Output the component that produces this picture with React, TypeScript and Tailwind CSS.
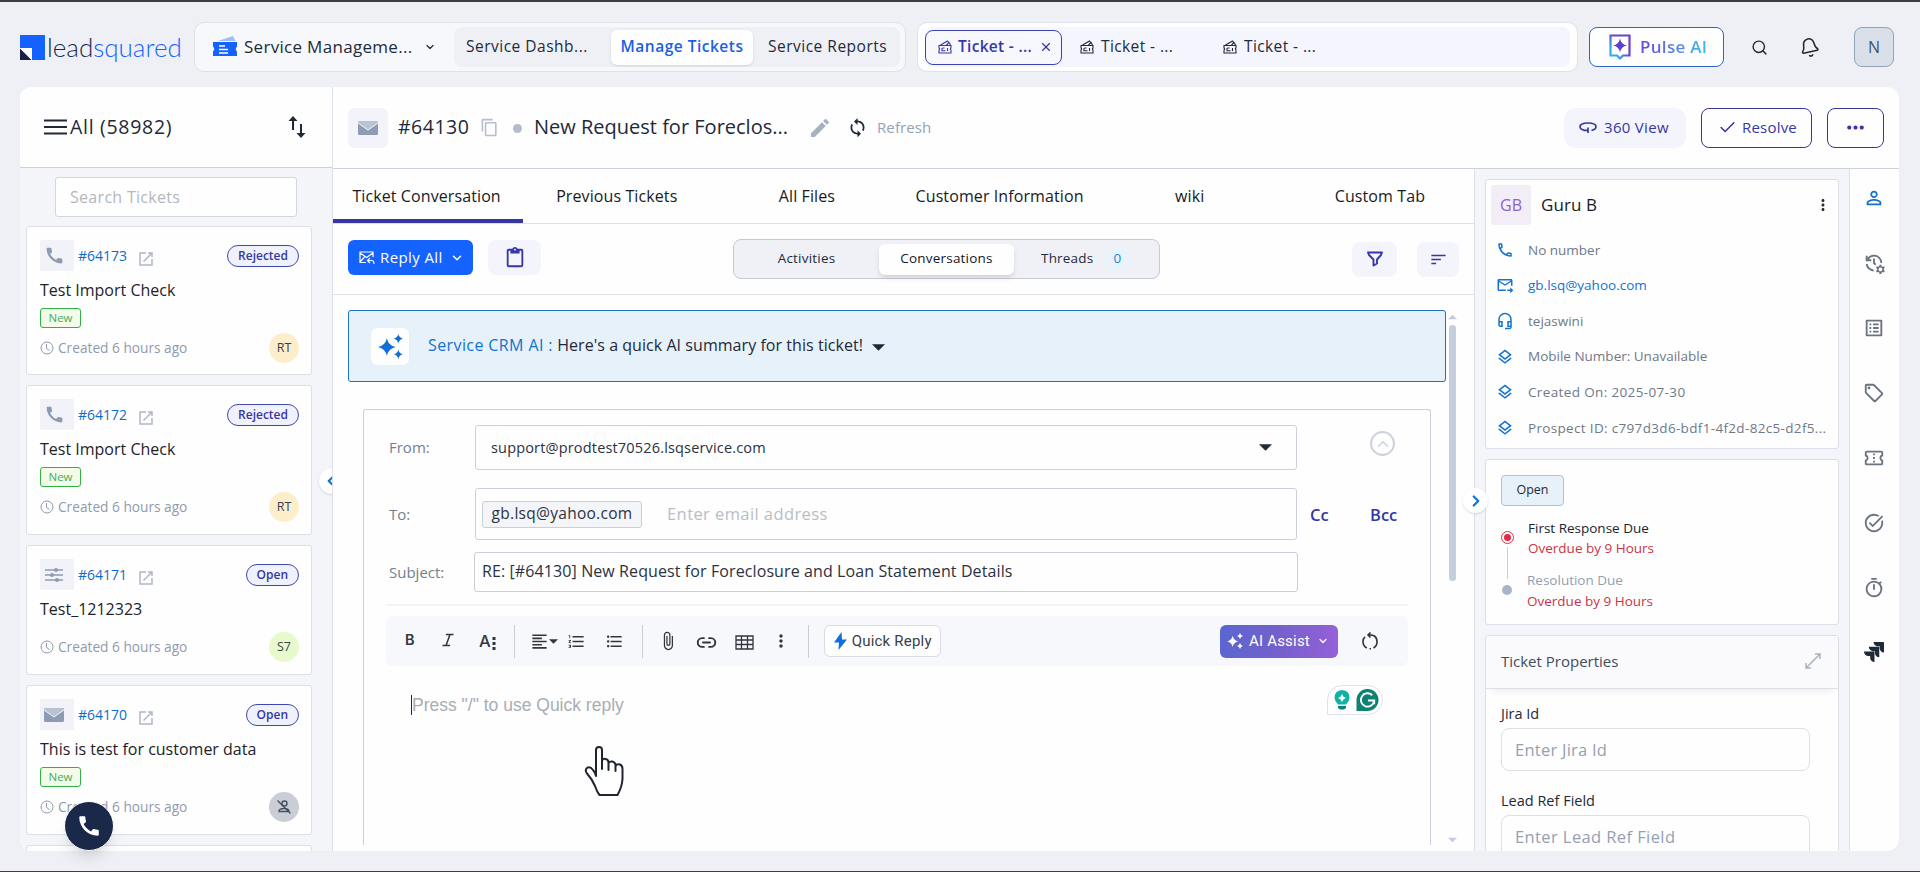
import type { ReactNode } from "react";
import {
  MdAttachFile,
  MdCall,
  MdContentCopy,
  MdEdit,
  MdFormatAlignLeft,
  MdFormatListBulleted,
  MdFormatListNumbered,
  MdMoreHoriz,
  MdMoreVert,
  MdOutlineCall,
  MdOutlineConfirmationNumber,
  MdOutlineContentPaste,
  MdOutlineForwardToInbox,
  MdOutlineHeadsetMic,
  MdOutlineLayers,
  MdOutlineListAlt,
  MdOutlineManageHistory,
  MdOutlineSell,
  MdOutlineTimer,
  MdPersonOutline,
  MdSort,
  MdSync,
  MdTaskAlt,
} from "react-icons/md";
import { SiJira } from "react-icons/si";
import { Bell, Check, ChevronDown, ChevronLeft, ChevronRight, ChevronUp, Link2, Search, X } from "lucide-react";

type Channel = "phone" | "manual" | "email";

interface Ticket {
  id: string;
  title: string;
  status: string;
  channel: Channel;
  isNew: boolean;
  assignee?: string;
  assigneeColor?: string;
  height: string;
}

const tickets: Ticket[] = [
  { id: "#64173", title: "Test Import Check", status: "Rejected", channel: "phone", isNew: true, assignee: "RT", assigneeColor: "bg-[#fdeecb]", height: "h-[149px]" },
  { id: "#64172", title: "Test Import Check", status: "Rejected", channel: "phone", isNew: true, assignee: "RT", assigneeColor: "bg-[#fdeecb]", height: "h-[150px]" },
  { id: "#64171", title: "Test_1212323", status: "Open", channel: "manual", isNew: false, assignee: "S7", assigneeColor: "bg-[#e8facb]", height: "h-[130px]" },
  { id: "#64170", title: "This is test for customer data", status: "Open", channel: "email", isNew: true, height: "h-[150px]" },
];

const tabs = ["Ticket Conversation", "Previous Tickets", "All Files", "Customer Information", "wiki", "Custom Tab"];

const contactRows = [
  { icon: MdOutlineCall, text: "No number", style: "text-[#6f7988]" },
  { icon: MdOutlineForwardToInbox, text: "gb.lsq@yahoo.com", style: "text-[#1272cf]" },
  { icon: MdOutlineHeadsetMic, text: "tejaswini", style: "text-[#6f7988]" },
  { icon: MdOutlineLayers, text: "Mobile Number: Unavailable", style: "text-[#6f7988]" },
  { icon: MdOutlineLayers, text: "Created On: 2025-07-30", style: "text-[#6f7988] tracking-[0.36px]" },
  { icon: MdOutlineLayers, text: "Prospect ID: c797d3d6-bdf1-4f2d-82c5-d2f5...", style: "text-[#6f7988] tracking-[0.33px]" },
];

const railIcons = [
  MdPersonOutline,
  MdOutlineManageHistory,
  MdOutlineListAlt,
  MdOutlineSell,
  MdOutlineConfirmationNumber,
  MdTaskAlt,
  MdOutlineTimer,
];

function EnvelopeIcon({ className }: { className?: string }) {
  return (
    <svg viewBox="0 0 20 14" className={className}>
      <path d="M0 0H20V1.5L10 8.5L0 1.5Z" fill="#b9c3d2" />
      <path d="M0 2.5L10 9.5L20 2.5V12.5Q20 14 18.5 14H1.5Q0 14 0 12.5Z" fill="#8d9cb3" />
    </svg>
  );
}

function SlidersIcon() {
  return (
    <svg viewBox="0 0 18 16" className="h-4 w-[18px]" fill="#8d9cb3" stroke="#8d9cb3">
      <path d="M0 3H18M0 8H18M0 13H18" strokeWidth="1.3" />
      <circle cx="11" cy="3" r="2" stroke="none" />
      <circle cx="7" cy="8" r="2" stroke="none" />
      <circle cx="12" cy="13" r="2" stroke="none" />
    </svg>
  );
}

function SparkleIcon({ className }: { className?: string }) {
  return (
    <svg viewBox="0 0 24 24" className={className} fill="currentColor">
      <path d="M8.5 4Q10 11 17 12.5Q10 14 8.5 21Q7 14 0 12.5Q7 11 8.5 4Z" />
      <path d="M19.5 0Q20.3 3.7 24 4.5Q20.3 5.3 19.5 9Q18.7 5.3 15 4.5Q18.7 3.7 19.5 0Z" />
      <path d="M19.5 15Q20.3 18.7 24 19.5Q20.3 20.3 19.5 24Q18.7 20.3 15 19.5Q18.7 18.7 19.5 15Z" />
    </svg>
  );
}

function OpenExternalIcon() {
  return (
    <svg viewBox="0 0 14 14" className="h-3.5 w-3.5" fill="none" stroke="#b0b7c6" strokeWidth="1.5">
      <path d="M7 1H1V13H13V7" />
      <path d="M9 1H13V5M13 1L4.5 9.5" />
    </svg>
  );
}

// Small ticket used on the open ticket tabs
function TicketTabIcon() {
  return (
    <svg viewBox="0 0 14 14" className="h-[14px] w-[14px]" fill="none" stroke="currentColor" strokeWidth="1.1">
      <path d="M1 5.5H13V8Q11.8 9 13 10.2V13H1V10.2Q2.2 9 1 8Z" />
      <path d="M2.5 5L9.5 1L11 3M8.5 5L11 2.5L12.5 5" />
      <path d="M4 8V10.8H7.5M4.5 8H6.5M9.5 8V11" />
    </svg>
  );
}

function Caret({ className }: { className?: string }) {
  return (
    <svg viewBox="0 0 14 7" className={className} fill="currentColor">
      <path d="M0 0H14L7 7Z" />
    </svg>
  );
}

function ChannelIcon({ channel }: { channel: Channel }) {
  if (channel === "phone") return <MdCall className="h-[21px] w-[21px] text-[#8d9cb3]" />;
  if (channel === "manual") return <SlidersIcon />;
  return <EnvelopeIcon className="h-[14px] w-5" />;
}

function TicketCard({ ticket }: { ticket: Ticket }) {
  return (
    <div className={`flex w-[286px] shrink-0 flex-col rounded-[3px] border border-[#dcdfe6] bg-[#fefefe] pt-[13px] pr-3 pl-[13px] ${ticket.height}`}>
      <div className="flex h-[31px] items-center">
        <div className="flex h-[31px] w-[34px] items-center justify-center bg-[#f2f3f8] pr-1.5">
          <ChannelIcon channel={ticket.channel} />
        </div>
        <span className="ml-1 w-[61px] text-sm font-medium text-[#0f6ccb]">{ticket.id}</span>
        <div className="mt-1.5">
          <OpenExternalIcon />
        </div>
        <span className="ml-auto flex h-[22px] items-center rounded-full border border-[#3f47b5] bg-[#eff1fb] px-2.5 text-xs font-semibold text-[#3637a5]">
          {ticket.status}
        </span>
      </div>
      <div className="mt-1.5 h-[26px] text-base leading-[26px] whitespace-nowrap text-[#1f2329]">{ticket.title}</div>
      {ticket.isNew ? (
        <div className="mt-[5px] flex h-5 w-[41px] items-center justify-center rounded-[3px] border border-[#2fb344] bg-[#f4fbe9] text-[11.5px] text-[#3fae5c]">New</div>
      ) : (
        <div className="h-[5px]" />
      )}
      <div className="mt-[5px] flex h-[30px] items-center">
        <svg viewBox="0 0 14 14" className="h-3.5 w-3.5" fill="none" stroke="#8f99a9">
          <circle cx="7" cy="7" r="6" />
          <path d="M6.5 3V7.5L9.5 9.5" />
        </svg>
        <span className="ml-1 text-[13.7px] text-[#8f9bad]">Created 6 hours ago</span>
        {ticket.assignee ? (
          <span className={`ml-auto flex h-[30px] w-[30px] items-center justify-center rounded-full text-[12.5px] text-[#374151] ${ticket.assigneeColor}`}>
            {ticket.assignee}
          </span>
        ) : (
          <span className="ml-auto flex h-[30px] w-[30px] items-center justify-center rounded-full bg-[#c9ced6]">
            <svg viewBox="0 0 16 16" className="h-4 w-4" fill="none" stroke="#475060" strokeWidth="1.4">
              <circle cx="8.5" cy="4.5" r="2.5" />
              <path d="M3 12.5Q3 9.5 8 9.5Q13 9.5 13 12.5Z M1.5 1.5L14.5 14.5" />
            </svg>
          </span>
        )}
      </div>
    </div>
  );
}

function TopBar() {
  return (
    <header className="flex h-[85px] items-start pt-5 pl-5">
      <div className="flex h-[50px] w-full items-center">
        <div className="flex w-[174px] items-center">
          <svg viewBox="0 0 25 25" className="h-[25px] w-[25px]">
            <path d="M0 0H25V25H0Z" fill="#1463ff" />
            <path d="M0 13H12V25H0Z" fill="#fff" />
            <path d="M0 13.5L11.5 25H0Z" fill="#16223f" />
          </svg>
          <span className="ml-0.5 font-[Lato] text-[26px] leading-[30px] font-light text-[#1c2b4b]">
            lead<span className="text-[#1463ff]">squared</span>
          </span>
        </div>

        <nav className="flex h-[50px] w-[712px] items-center rounded-[10px] border border-[#dfe1e9] bg-[#f7f8fc] pl-[18px] text-[15.5px] text-[#222b3a]">
          <svg viewBox="0 0 24 21" className="-mt-0.5 h-[21px] w-6">
            <path d="M5 5L20 0L22.5 5Z" fill="#9dbcff" />
            <path d="M0 6H24V10.5Q21.5 13 24 15.5V20H0V15.5Q2.5 13 0 10.5Z" fill="#1463ff" />
            <path d="M6 10H12M6 13.5H15M6 17H15" stroke="#fff" strokeWidth="1.6" />
          </svg>
          <span className="ml-[7px] w-[180px] text-[17px] tracking-[0.3px]">Service Manageme...</span>
          <ChevronDown className="h-3 w-3" strokeWidth={2.5} />
          <div className="ml-[18px] flex h-10 w-[446px] items-center rounded-lg bg-[#eff0f5] tracking-[0.5px]">
            <span className="w-[157px] pl-3">Service Dashb...</span>
            <span className="flex h-[35px] w-[142px] items-center justify-center rounded-md bg-[#fefefe] font-semibold whitespace-nowrap text-[#1b5fe8] shadow-sm">
              Manage Tickets
            </span>
            <span className="ml-[15px]">Service Reports</span>
          </div>
        </nav>

        <div className="ml-[11px] flex h-[50px] w-[661px] items-center rounded-[10px] border border-[#dfe1ee] bg-[#fefefe] px-[7px]">
          <div className="flex h-10 w-full items-center rounded-lg bg-[#f4f5fd] text-[15.5px] tracking-[0.4px] text-[#222b3a]">
            <div className="flex h-[35px] w-[137px] items-center rounded-lg border border-[#3c43b0] bg-[#f7f8fe] pl-3 font-semibold text-[#3637a5]">
              <TicketTabIcon />
              <span className="ml-1.5 w-[81px] tracking-[0.3px]">Ticket - ...</span>
              <X className="h-[14px] w-[14px]" />
            </div>
            <div className="ml-[18px] flex w-[143px] items-center">
              <TicketTabIcon />
              <span className="ml-[7px]">Ticket - ...</span>
            </div>
            <div className="flex items-center">
              <TicketTabIcon />
              <span className="ml-[7px]">Ticket - ...</span>
            </div>
          </div>
        </div>

        <button className="ml-[11px] flex h-10 w-[135px] items-center rounded-lg border border-[#2b67c9] bg-[#fefefe] pl-[19px]">
          <svg viewBox="0 0 22 26" className="h-[26px] w-[22px]">
            <defs>
              <linearGradient id="pulse" x1="0" y1="1" x2="1" y2="0">
                <stop offset="0.2" stopColor="#2eb0f0" />
                <stop offset="0.6" stopColor="#6a3fd6" />
              </linearGradient>
            </defs>
            <path d="M1.5 1.5H20.5V21.5H14L11 24.5L8 21.5H1.5Z" fill="none" stroke="url(#pulse)" strokeWidth="2.2" />
            <path d="M11 4.5Q12 10.5 18 11.5Q12 12.5 11 18.5Q10 12.5 4 11.5Q10 10.5 11 4.5Z" fill="#5b3fd0" />
          </svg>
          <span className="ml-[9px] bg-gradient-to-r from-[#6b45d8] via-[#5a7de4] to-[#31bdf0] bg-clip-text text-[17px] font-semibold tracking-[0.3px] text-transparent">
            Pulse AI
          </span>
        </button>
        <Search className="ml-[27px] h-[17px] w-[17px] text-[#1f2937]" />
        <Bell className="ml-[31px] h-[21px] w-[21px] -rotate-12 text-[#1f2937]" strokeWidth={1.8} />
        <div className="ml-[34px] flex h-10 w-10 items-center justify-center rounded-lg border border-[#93a3ba] bg-[#d9dfe8] text-base font-medium text-[#42536d]">N</div>
      </div>
    </header>
  );
}

function TicketList() {
  return (
    <aside className="relative flex w-[313px] shrink-0 flex-col overflow-hidden border-r border-[#dcdfe8] bg-[#f4f5f9]">
      <div className="flex h-[81px] shrink-0 items-center border-b border-[#cdd1d9] bg-[#fefefe] pl-6">
        <svg viewBox="0 0 23 16" className="h-4 w-[23px]" stroke="#1f2937" strokeWidth="2.2">
          <path d="M0 1.5H23M0 8H23M0 14.5H23" />
        </svg>
        <span className="ml-[3px] text-[19.5px] tracking-[0.7px] text-[#1f2937]">All (58982)</span>
        <svg viewBox="0 0 18 22" className="mr-[26px] ml-auto h-[22px] w-[18px]" fill="#1f2937">
          <path d="M5 0L9.5 5H6V14H4V5H0.5ZM13 22L8.5 17H12V8H14V17H17.5Z" />
        </svg>
      </div>
      <div className="mt-[9px] ml-[35px] flex h-10 w-[242px] shrink-0 items-center rounded-[3px] border border-[#d3d6dd] bg-[#fefefe] pl-3.5 text-base tracking-[0.3px] text-[#b3b7be]">
        Search Tickets
      </div>
      <div className="mt-[9px] ml-1.5 flex flex-col gap-2.5">
        {tickets.map((ticket) => (
          <TicketCard key={ticket.id} ticket={ticket} />
        ))}
        <div className="h-10 w-[286px] rounded-[3px] border border-[#dcdfe6] bg-[#fefefe]" />
      </div>
      <div className="absolute top-[381px] -right-[13px] flex h-[26px] w-[26px] items-center justify-center rounded-full bg-white shadow">
        <ChevronLeft className="mr-0.5 h-[18px] w-[18px] shrink-0 text-[#1272cf]" strokeWidth={3} />
      </div>
    </aside>
  );
}

function TicketHeader() {
  return (
    <div className="flex h-[82px] shrink-0 items-center border-b border-[#cdd1d9] px-[15px] text-[#1f2937]">
      <div className="flex h-10 w-10 items-center justify-center rounded-md bg-[#f3f4f9]">
        <EnvelopeIcon className="h-[14px] w-5" />
      </div>
      <span className="ml-2.5 w-[82px] pb-0.5 text-[19.5px] tracking-[0.5px]">#64130</span>
      <MdContentCopy className="h-[19px] w-[19px] text-[#b6bfcd]" />
      <span className="mt-0.5 ml-3.5 h-[9px] w-[9px] rounded-full bg-[#b3bccb]" />
      <span className="ml-3 w-[274px] pb-0.5 text-[20px] whitespace-nowrap">New Request for Foreclos...</span>
      <MdEdit className="h-6 w-6 text-[#a7b1c2]" />
      <MdSync className="ml-[15px] h-[21px] w-[21px]" />
      <span className="ml-[9px] pb-px text-[15px] tracking-[0.1px] text-[#94a1b8]">Refresh</span>
      <div className="ml-auto flex items-center text-[15px] font-medium text-[#3637a5]">
        <button className="flex h-10 w-[122px] items-center rounded-xl bg-[#f4f4fd] pl-[15px]">
          <svg viewBox="0 0 18 12" className="h-3 w-[18px]" fill="none" stroke="currentColor" strokeWidth="1.7">
            <path d="M6 8.5Q1 7.5 1 4.8Q1 1 9 1Q17 1 17 4.8Q17 7.5 12.5 8.5M4.5 8.3H9M9 5.5V11" />
          </svg>
          <span className="ml-[7px] tracking-[0.3px]">360 View</span>
        </button>
        <button className="ml-[15px] flex h-10 w-[111px] items-center rounded-lg border border-[#3637a5] pl-4">
          <Check className="h-[19px] w-[19px]" strokeWidth={2} />
          <span className="ml-[5px] tracking-[0.2px]">Resolve</span>
        </button>
        <button className="ml-[15px] flex h-10 w-[57px] items-center justify-center rounded-lg border border-[#3637a5]">
          <MdMoreHoriz className="h-[25px] w-[25px]" />
        </button>
      </div>
    </div>
  );
}

function ConversationToolbar() {
  return (
    <div className="flex h-[71px] shrink-0 items-center border-b border-[#dfe1e7] pl-[15px]">
      <button className="-mt-[3px] flex h-[35px] w-[125px] items-center rounded-md bg-[#1463ff] pl-[11px] text-[15px] font-medium text-white">
        <svg viewBox="0 0 16 14" className="h-3.5 w-4" fill="none" stroke="currentColor" strokeWidth="1.2">
          <path d="M7 11.5H1V1H14V6M1 2L7.5 6.5L14 2M1 11L5.5 6M11 7L8.5 9.5L11 12M8.5 9.5H12.5Q15 9.5 15 13" />
        </svg>
        <span className="ml-[5px] w-[70px] text-left tracking-[0.4px]">Reply All</span>
        <ChevronDown className="h-3.5 w-3.5" strokeWidth={2.5} />
      </button>
      <button className="-mt-[3px] ml-[15px] flex h-[35px] w-[53px] items-center justify-center rounded-lg bg-[#f4f4fd]">
        <MdOutlineContentPaste className="h-[22px] w-[22px] text-[#3637a5]" />
      </button>
      <div className="ml-48 flex h-10 w-[427px] items-center rounded-lg border border-[#c7cad4] bg-[#f0f1f6] text-[13.5px] tracking-[0.2px] text-[#222b3a]">
        <span className="w-[145px] pb-px text-center">Activities</span>
        <span className="flex h-[31px] w-[135px] items-center justify-center rounded-md bg-[#fefefe] pb-px text-[#14181f] shadow-md">Conversations</span>
        <span className="ml-[27px] pb-px">Threads</span>
        <span className="ml-[11px] flex h-[26px] w-[26px] items-center justify-center rounded-full bg-[#e9f3fb] pb-px text-[#1b84dc]">0</span>
      </div>
      <button className="ml-48 flex h-[35px] w-[45px] items-center justify-center rounded-lg bg-[#f4f4fd]">
        <svg viewBox="0 0 16 16" className="h-4 w-4" fill="none" stroke="#3637a5" strokeWidth="1.9" strokeLinejoin="round">
          <path d="M1 1.5H15L14 4L10 8.5V12.5L6.5 14.5V8.5L2 4Z" />
        </svg>
      </button>
      <button className="ml-5 flex h-[35px] w-[42px] items-center justify-center rounded-lg bg-[#f4f4fd]">
        <MdSort className="h-[19px] w-[19px] text-[#3637a5]" />
      </button>
    </div>
  );
}

function Divider({ className }: { className?: string }) {
  return <span className={`h-[33px] w-px bg-[#c9ced8] ${className}`} />;
}

function EditorToolbar() {
  return (
    <div className="mt-[10px] flex h-[50px] w-[1022px] items-center rounded-md bg-[#f7f8fc] pl-[19px] text-[#31353d]">
      <span className="w-[37px] pb-0.5 font-[Inter] text-[14.5px] font-semibold">B</span>
      <svg viewBox="0 0 12 14" className="-mt-0.5 h-3.5 w-3" fill="none" stroke="currentColor" strokeWidth="1.5">
        <path d="M4 1.5H11.5M0.5 12.5H8M8 1.5L4 12.5" />
      </svg>
      <span className="mt-px ml-[25px] font-[Inter] text-[16.5px] font-medium">A</span>
      <svg viewBox="0 0 4 14" className="mt-[3px] ml-px h-3.5 w-1" fill="currentColor">
        <path d="M0.5 1H3.5V4H0.5ZM0.5 6H3.5V9H0.5ZM0.5 11H3.5V14H0.5Z" />
      </svg>
      <Divider className="ml-[18px]" />
      <MdFormatAlignLeft className="ml-[15px] h-[19px] w-[19px]" />
      <Caret className="h-[5px] w-[9px]" />
      <MdFormatListNumbered className="ml-[9px] h-[19px] w-[19px]" />
      <MdFormatListBulleted className="ml-[19px] h-[19px] w-[19px]" />
      <Divider className="ml-[18px]" />
      <MdAttachFile className="ml-[15px] h-5 w-5" />
      <Link2 className="mt-0.5 ml-[18px] h-[21px] w-[21px]" strokeWidth={2.2} />
      <svg viewBox="0 0 19 15" className="mt-0.5 ml-[18px] h-[15px] w-[19px]" fill="none" stroke="currentColor" strokeWidth="1.3">
        <path d="M1 1H18V14H1ZM1 5H18M1 9.5H18M6.5 1V14M12.500 1V14" />
      </svg>
      <MdMoreVert className="ml-[17px] h-5 w-5" />
      <Divider className="ml-[17px]" />
      <button className="ml-[15px] flex h-8 w-[117px] items-center rounded-md border border-[#d9dce4] bg-[#fefefe] pl-[9px] font-[Roboto] text-[15px] tracking-[0.2px] text-[#3a3f4a]">
        <svg viewBox="0 0 13 18" className="h-[18px] w-[13px]" fill="#0f6fe0">
          <path d="M7.5 0L0 10.5H5L4.5 18L13 7.5H8Z" />
        </svg>
        <span className="ml-[5px] whitespace-nowrap">Quick Reply</span>
      </button>
      <button className="ml-auto flex h-[33px] w-[118px] items-center rounded-md bg-gradient-to-r from-[#5a66d0] via-[#7560cc] to-[#9560d8] pl-[7px] font-[Roboto] text-[15px] text-white">
        <SparkleIcon className="h-4 w-4" />
        <span className="ml-1.5 w-[68px] text-left tracking-[0.2px]">AI Assist</span>
        <ChevronDown className="h-3 w-3" strokeWidth={2.5} />
      </button>
      <svg viewBox="0 0 16 18" className="mr-[30px] ml-6 h-[18px] w-4" fill="none" stroke="currentColor" strokeWidth="1.6">
        <path d="M6 3Q15 2 15 10Q15 14 11.5 16M9 16.8H7.5M4.8 16Q1 14 1 9.5Q1 6.5 3 4.8M8.5 0.5L6 3L8.5 5.5" />
      </svg>
    </div>
  );
}

function FormRow({ label, className, children }: { label: string; className?: string; children: ReactNode }) {
  return (
    <div className={`flex items-center ${className}`}>
      <span className="w-[86px] shrink-0 pl-[3px] text-[15px] text-[#767f8d]">{label}</span>
      {children}
    </div>
  );
}

function Composer() {
  return (
    <div className="relative mt-[27px] ml-[15px] h-[436px] w-[1068px] rounded-t-[3px] border border-b-0 border-[#cbd0da] pl-[22px]">
      <FormRow label="From:" className="mt-[15px] h-[45px]">
        <div className="ml-[3px] flex h-[45px] w-[822px] items-center rounded-[3px] border border-[#cbd0da] pr-6 pl-[15px] text-[14.5px] tracking-[0.17px] text-[#2b3240]">
          support@prodtest70526.lsqservice.com
          <Caret className="ml-auto h-[7px] w-[13px] text-[#1f2937]" />
        </div>
        <span className="-mt-2 ml-[73px] flex h-[25px] w-[25px] items-center justify-center rounded-full border-2 border-[#cdd2db] text-[#cdd2db]">
          <ChevronUp className="h-[18px] w-[18px] shrink-0" />
        </span>
      </FormRow>
      <FormRow label="To:" className="mt-[18px] h-[52px]">
        <div className="ml-[3px] flex h-[52px] w-[822px] items-center rounded-[3px] border border-[#cbd0da] pl-1.5">
          <span className="flex h-[27px] w-40 items-center justify-center rounded-[3px] border border-[#c9ced8] bg-[#f4f5f9] text-[15.5px] tracking-[0.28px] text-[#2b3240]">
            gb.lsq@yahoo.com
          </span>
          <span className="ml-[25px] text-[16.5px] tracking-[0.42px] text-[#b9bdc5]">Enter email address</span>
        </div>
        <span className="ml-[13px] w-[60px] pt-0.5 text-[16.5px] font-semibold text-[#3637a5]">Cc</span>
        <span className="pt-0.5 text-[16.5px] font-semibold text-[#3637a5]">Bcc</span>
      </FormRow>
      <FormRow label="Subject:" className="mt-3 h-10">
        <div className="ml-0.5 flex h-10 w-[824px] items-center rounded-[3px] border border-[#c9cdd5] pb-0.5 pl-[7px] text-base tracking-[0.1px] text-[#2b3240]">
          RE: [#64130] New Request for Foreclosure and Loan Statement Details
        </div>
      </FormRow>
      <div className="mt-3 h-0.5 w-[1022px] bg-[#f3f4f9]" />
      <EditorToolbar />
      <div className="mt-[29px] ml-[25px] flex h-5 items-center border-l border-[#1f2937] font-['Liberation_Sans'] text-[17.5px] text-[#a9adb3]">
        Press "/" to use Quick reply
      </div>

      {/* Grammarly widget */}
      <div className="absolute top-[275px] right-[47px] flex h-[30px] w-[56px] items-center rounded-t-full rounded-br-full border border-[#e0e2e9] bg-white pl-1.5">
        <svg viewBox="0 0 16 20" className="h-5 w-4">
          <path d="M8 0Q15.5 0.5 15.5 7.5Q15.5 11 12 14.5H4Q0.5 11 0.5 7.5Q0.5 0.5 8 0Z" fill="#10b3a3" />
          <path d="M8 3.5Q8.5 7 12 8Q8.5 9 8 12.5Q7.5 9 4 8Q7.5 7 8 3.5Z" fill="#fff" />
          <path d="M4 16H12V18L10 19.5H6L4 18Z" fill="#0b8377" />
        </svg>
        <svg viewBox="0 0 23 23" className="ml-1.5 h-[22px] w-[23px]" fill="none">
          <path d="M0 23V11.5A11.5 11.5 0 1 1 11.5 23Z" fill="#0d8270" />
          <path d="M16.5 6.5A7 7 0 1 0 18.5 12H12M18.5 12V16" stroke="#fff" strokeWidth="2" />
        </svg>
      </div>

      {/* Mouse pointer */}
      <svg viewBox="0 0 40 51" className="absolute top-[336px] left-[220px] h-[51px] w-10" fill="#fff" stroke="#20242d" strokeWidth="2" strokeLinejoin="round">
        <path d="M12 30V4Q12 1 15 1Q18 1 18 4V23V15Q19 12 21.5 13Q24.5 13.5 24.5 16.5V24V17Q26 15 28.5 15.5Q31.5 16.5 31.5 19V25V20Q33 17.5 36 18.5Q38.5 19.5 38.5 23V33Q38 41 33.5 49H15.5Q13 46 11 40Q8 33 3 27.5Q0.5 24 3 22Q6 20 9 24Q11 26 12 30Z" />
      </svg>
    </div>
  );
}

function Conversation() {
  return (
    <section className="relative flex w-[1142px] shrink-0 flex-col border-r border-[#dcdfe8]">
      <div className="grid h-[55px] shrink-0 grid-cols-6 border-b border-[#dcdfe6] text-base font-medium tracking-[0.1px] text-[#161b24]">
        {tabs.map((tab, i) => (
          <div
            key={tab}
            className={`flex items-center justify-center whitespace-nowrap ${i === 0 ? "border-b-4 border-[#3637a5] pt-[3px] pr-[3px]" : "pb-px"} ${i > 2 ? "pl-0.5" : ""} ${i === 1 || i === 2 ? "pr-[3px]" : ""}`}
          >
            {tab}
          </div>
        ))}
      </div>
      <ConversationToolbar />
      <div className="flex flex-1 flex-col overflow-hidden pt-[15px] pl-[15px]">
        <div className="flex h-[72px] w-[1098px] shrink-0 items-center rounded-[3px] border border-[#1b72c8] bg-[#e7f1fa] pl-[22px]">
          <div className="flex h-[37px] w-[38px] items-center justify-center rounded-md bg-[#fefefe]">
            <SparkleIcon className="h-[25px] w-[25px] text-[#0f6fd6]" />
          </div>
          <span className="ml-[19px] pb-[3px] text-base tracking-[0.05px] text-[#1f2937]">
            <span className="tracking-[0.4px] text-[#1272cf]">Service CRM AI :</span> Here's a quick AI summary for this ticket!
          </span>
          <Caret className="mt-0.5 ml-[9px] h-[7px] w-[13px] text-[#1f2937]" />
        </div>
        <Composer />
      </div>

      {/* Scrollbar */}
      <div className="absolute top-[145px] right-[17px] flex h-[529px] w-[9px] flex-col items-center text-[#c3ccda]">
        <Caret className="h-[6px] w-[9px] rotate-180" />
        <div className="mt-[5px] h-[256px] w-[7px] rounded-full bg-[#c5ceda]" />
        <Caret className="mt-auto h-[6px] w-[9px]" />
      </div>
      <div className="absolute top-[319px] -right-[14px] z-10 flex h-[25px] w-[25px] items-center justify-center rounded-full bg-white shadow-sm">
        <ChevronRight className="h-[18px] w-[18px] text-[#1272cf]" strokeWidth={3} />
      </div>
    </section>
  );
}

function DetailsPanel() {
  return (
    <aside className="flex w-[374px] shrink-0 flex-col gap-2.5 overflow-hidden bg-[#f4f5f9] pt-[10px] pl-[10px]">
      <div className="h-[270px] w-[354px] shrink-0 rounded-[3px] border border-[#dcdfe6] bg-[#fefefe] pt-[5px] pl-[5px]">
        <div className="flex h-10 items-center">
          <span className="flex h-10 w-10 items-center justify-center rounded-[3px] bg-[#f3edf7] text-base text-[#8d62c9]">GB</span>
          <span className="ml-2.5 text-[17px] font-medium tracking-[0.1px] text-[#161b24]">Guru B</span>
          <MdMoreVert className="mr-1.5 ml-auto h-[18px] w-[18px] text-[#1f2937]" />
        </div>
        <div className="mt-[7px] flex flex-col">
          {contactRows.map(({ icon: Icon, text, style }) => (
            <div key={text} className="flex h-[35.6px] items-center pl-[5px]">
              <Icon className="h-[18px] w-[18px] shrink-0 text-[#1272cf]" />
              <span className={`ml-3.5 text-[13.5px] whitespace-nowrap ${style}`}>{text}</span>
            </div>
          ))}
        </div>
      </div>

      <div className="h-[166px] w-[354px] shrink-0 rounded-[3px] border border-[#dcdfe6] bg-[#fefefe] pt-[15px] pl-[15px]">
        <div className="flex h-[31px] w-[63px] items-center justify-center rounded-sm border border-[#a5c4e4] bg-[#e7f1fa] text-[12.5px] text-[#1f2937]">Open</div>
        <div className="mt-3 flex text-[13.5px] leading-5">
          <div className="flex w-[13px] flex-col items-center pt-[13px]">
            <span className="flex h-[13px] w-[13px] items-center justify-center rounded-full border border-[#d9324a] bg-white">
              <span className="h-[7px] w-[7px] rounded-full bg-[#e02b45]" />
            </span>
            <span className="mt-[3px] h-8 w-px bg-[#c9ced8]" />
            <span className="mt-[6px] mr-px h-2.5 w-2.5 rounded-full bg-[#a9b5c7]" />
          </div>
          <div className="ml-[14px]">
            <div className="text-[#1b2330]">First Response Due</div>
            <div className="text-[#cb3447]">Overdue by 9 Hours</div>
            <div className="mt-3 -ml-px text-[#949eae]">Resolution Due</div>
            <div className="-ml-px pt-px text-[#cb3447]">Overdue by 9 Hours</div>
          </div>
        </div>
      </div>

      <div className="h-[260px] w-[354px] shrink-0 rounded-[3px] border border-[#dcdfe6] bg-[#fefefe]">
        <div className="flex h-[53px] items-center border-b border-[#dcdfe6] bg-[#fafafc] pr-[17px] pb-0.5 pl-[15px] text-[15px] text-[#444c59] shadow-[0_8px_8px_-6px_rgba(0,0,0,0.08)]">
          Ticket Properties
          <svg viewBox="0 0 16 16" className="ml-auto h-4 w-4" fill="none" stroke="#a9b2c0" strokeWidth="1.5">
            <path d="M10 1H15V6M15 1L1 15M1 10V15H6" />
          </svg>
        </div>
        <div className="pl-[15px] text-[14.5px] leading-5 text-[#1f2937]">
          <div className="mt-[15px]">Jira Id</div>
          <div className="mt-1 flex h-[43px] w-[309px] items-center rounded-lg border border-[#dcdfe6] pl-[13px] text-[16.5px] tracking-[0.25px] text-[#96a0b2]">Enter Jira Id</div>
          <div className="mt-5">Lead Ref Field</div>
          <div className="mt-1 flex h-[43px] w-[309px] items-center rounded-lg border border-[#dcdfe6] pl-[13px] text-[16.5px] tracking-[0.4px] text-[#96a0b2]">Enter Lead Ref Field</div>
        </div>
      </div>
    </aside>
  );
}

export default function App() {
  return (
    <div className="relative h-[872px] w-[1920px] overflow-hidden border-t-2 border-b border-t-[#3f3f40] border-b-[#3f3f45] bg-[#eff0f5] font-['Open_Sans',sans-serif]">
      <TopBar />
      <main className="ml-5 flex h-[764px] w-[1879px] overflow-hidden rounded-xl bg-[#fefefe]">
        <TicketList />
        <div className="flex min-w-0 flex-1 flex-col">
          <TicketHeader />
          <div className="flex min-h-0 flex-1">
            <Conversation />
            <DetailsPanel />
            <div className="flex w-[50px] flex-col items-center border-l border-[#dcdfe8] pt-[18px] pr-px text-[#6b7280]">
              {railIcons.map((Icon, i) => (
                <div key={i} className="flex h-[65px] items-start">
                  <Icon className={`h-[22px] w-[22px] ${i === 0 ? "text-[#1272cf]" : ""}`} />
                </div>
              ))}
              <SiJira className="h-5 w-5 text-[#1f2937]" />
            </div>
          </div>
        </div>
      </main>

      {/* Floating dialer button */}
      <div className="absolute top-[799px] left-[64px] flex h-[50px] w-[50px] items-center justify-center rounded-full border border-white bg-[#1a2849] shadow-lg">
        <MdCall className="h-[26px] w-[26px] text-white" />
      </div>
    </div>
  );
}
